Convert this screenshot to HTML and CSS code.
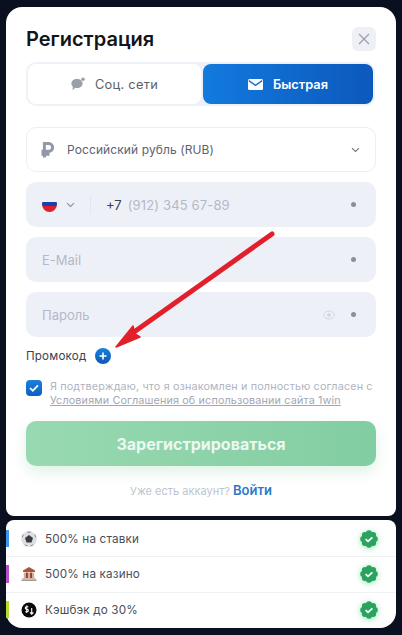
FILE: index.html
```html
<!DOCTYPE html>
<html lang="ru">
<head>
  <meta charset="UTF-8" />
  <meta name="viewport" content="width=device-width, initial-scale=1.0"/>
  <title>Регистрация</title>
  <link rel="stylesheet" href="styles.css">
</head>
<body>

  <section class="card">
    <div class="head">
      <h1>Регистрация</h1>
      <button class="close" type="button" aria-label="Закрыть">
        <svg width="12" height="12" viewBox="0 0 12 12"><path d="M1 1l10 10M11 1L1 11" stroke="#9aa3b5" stroke-width="1.4" fill="none"/></svg>
      </button>
    </div>

    <div class="tabs">
      <div class="tab">
        <svg width="14" height="14" viewBox="0 0 14 14"><path d="M6 2c3.200 0 5.600 1.900 5.600 4.500S9.200 11 6 11c-.6 0-1.200-.1-1.700-.2L1.500 13.200l.4-3.500C.9 8.900.4 7.800.4 6.500.4 3.900 2.800 2 6 2z" fill="#9a9fa8"/><circle cx="12" cy="2.200" r="1.800" fill="#9a9fa8"/></svg>
        <span>Соц. сети</span>
      </div>
      <div class="tab tab-active">
        <svg width="15" height="11" viewBox="0 0 15 11"><rect width="15" height="11" rx="1.500" fill="#fff"/><path d="M.8 1.600l6.700 4.800 6.700-4.800" stroke="#1472d0" stroke-width="1.300" fill="none"/></svg>
        <span>Быстрая</span>
      </div>
    </div>

    <div class="select">
      <svg class="rub" width="13" height="16" viewBox="0 0 13 16"><path d="M3.400 15.500V1.600h4.400a3.800 3.800 0 0 1 0 7.600H.5M.5 12.300h8" stroke="#9298a8" stroke-width="3" fill="none"/></svg>
      <span class="select-text">Российский рубль (RUB)</span>
      <svg class="chev" width="9" height="6" viewBox="0 0 9 6"><path d="M1 1.200l3.500 3.200L8 1.200" stroke="#6d7482" stroke-width="1.100" fill="none"/></svg>
    </div>

    <div class="field">
      <span class="flag"></span>
      <svg class="chev" width="9" height="6" viewBox="0 0 9 6"><path d="M1 1.200l3.500 3.200L8 1.200" stroke="#8a90a0" stroke-width="1.100" fill="none"/></svg>
      <span class="sep"></span>
      <span class="code">+7</span>
      <span class="ph phone">(912) 345 67-89</span>
      <span class="dot"></span>
    </div>
    <div class="field">
      <span class="ph">E-Mail</span>
      <span class="dot"></span>
    </div>
    <div class="field">
      <span class="ph">Пароль</span>
      <svg class="eye" width="12" height="10" viewBox="0 0 12 10"><ellipse cx="6" cy="5" rx="5.300" ry="4" stroke="#d3d8e3" fill="none"/><circle cx="6" cy="5" r="2" fill="#d3d8e3"/></svg>
      <span class="dot"></span>
    </div>

    <div class="promo">
      <span>Промокод</span>
      <span class="plus">
        <svg width="8" height="8" viewBox="0 0 8 8"><path d="M4 .5v7M.5 4h7" stroke="#fff" stroke-width="1.600"/></svg>
      </span>
    </div>

    <div class="agree">
      <span class="check">
        <svg width="10" height="8" viewBox="0 0 10 8"><path d="M1 4l2.800 2.700L9 1.300" stroke="#fff" stroke-width="1.700" fill="none"/></svg>
      </span>
      <p>Я подтверждаю, что я ознакомлен и полностью согласен с <a href="#">Условиями Соглашения об использовании сайта 1win</a></p>
    </div>

    <button class="submit" type="button">Зарегистрироваться</button>

    <p class="login">Уже есть аккаунт? <a href="#">Войти</a></p>
  </section>

  <section class="bonus">
    <svg class="defs" width="0" height="0">
      <symbol id="badge" viewBox="0 0 18 18">
        <g fill="#2aa35f">
          <circle cx="9" cy="9" r="6.500"/>
          <circle cx="9" cy="3.200" r="3"/>
          <circle cx="13.100" cy="4.900" r="3"/>
          <circle cx="14.800" cy="9" r="3"/>
          <circle cx="13.100" cy="13.100" r="3"/>
          <circle cx="9" cy="14.800" r="3"/>
          <circle cx="4.900" cy="13.100" r="3"/>
          <circle cx="3.200" cy="9" r="3"/>
          <circle cx="4.900" cy="4.900" r="3"/>
        </g>
        <path d="M5.600 9.100l2.400 2.200 4.400-4" stroke="#fff" stroke-width="1.800" fill="none"/>
      </symbol>
    </svg>
    <div class="row">
      <span class="bar bar-blue"></span>
      <svg class="ico" width="16" height="16" viewBox="0 0 16 16"><circle cx="8" cy="8" r="7.800" fill="#dfdfe1"/><path d="M8 4l4 2.900-1.500 4.600h-5L4 6.900z" fill="#3a3c41"/><path d="M5.500.9L8 1.800 10.500.9 8 .4zM.7 7l1.500-2 .2-2.300A7.500 7.500 0 0 0 .7 7zM15.300 7l-1.500-2-.2-2.300A7.500 7.500 0 0 1 15.300 7zM3 13.600l2.600.3 1.200 1.600A7.500 7.500 0 0 1 3 13.600zM13 13.600l-2.600.3-1.200 1.600A7.500 7.500 0 0 0 13 13.600z" fill="#77797e"/></svg>
      <span class="row-text">500% на ставки</span>
      <svg class="badge" width="18" height="18"><use href="#badge"/></svg>
    </div>
    <div class="row">
      <span class="bar bar-purple"></span>
      <svg class="ico" width="16" height="16" viewBox="0 0 16 16"><path d="M8 1l6 3.400V6H2V4.400z" fill="#a4563f"/><path d="M2.800 6.500h2.200V12H2.800zM6.900 6.500h2.200V12H6.900zM11 6.500h2.200V12H11z" fill="#e0a98f"/><path d="M5 6.500h1.900V12H5zM9.100 6.500H11V12H9.100z" fill="#8f3f2f"/><path d="M1.500 12h13v1.500h-13z" fill="#c9b8ae"/><path d="M.5 13.500h15V15H.5z" fill="#a39a96"/></svg>
      <span class="row-text">500% на казино</span>
      <svg class="badge" width="18" height="18"><use href="#badge"/></svg>
    </div>
    <div class="row">
      <span class="bar bar-lime"></span>
      <svg class="ico" width="16" height="16" viewBox="0 0 16 16"><circle cx="8" cy="8" r="7.500" fill="#0b0b0d"/><path d="M7.300 4.700H5.500a1.200 1.200 0 0 0 0 2.500h.6a1.200 1.200 0 0 1 0 2.500H4.300M5.800 3.500v7.500M10.700 6v6M9 10.300l1.700 1.800 1.700-1.800" stroke="#fff" stroke-width="1.100" fill="none"/></svg>
      <span class="row-text">Кэшбэк до 30%</span>
      <svg class="badge" width="18" height="18"><use href="#badge"/></svg>
    </div>
  </section>

  <!-- red arrow drawn over the form -->
  <svg class="arrow" width="402" height="635" viewBox="0 0 402 635">
    <path d="M272 234L127 337" stroke="#e2202c" stroke-width="5" stroke-linecap="round" fill="none"/>
    <path d="M116 347l17-21 2 8 5 3z" fill="#e2202c" stroke="#e2202c" stroke-width="1.500" stroke-linejoin="round"/>
  </svg>

</body>
</html>
```

FILE: styles.css
```css
* {
  box-sizing: border-box;
}

body {
  margin: 0;
  width: 402px;
  height: 635px;
  overflow: hidden;
  padding: 7px 6px 0;
  background: #0a1020;
  font-family: Inter, 'Noto Sans', sans-serif;
  display: flex;
  flex-direction: column;
  gap: 4px;
  position: relative;
}

.card {
  height: 509px;
  background: #fff;
  border-radius: 16px 16px 8px 8px;
  padding: 20px 20px 0;
}

.head {
  display: flex;
  justify-content: space-between;
  align-items: center;
  height: 24px;
}

h1 {
  margin: 0;
  font-size: 20px;
  font-weight: 600;
  color: #12151c;
}

.close {
  width: 24px;
  height: 24px;
  border: none;
  border-radius: 6px;
  background: #eef0f6;
  display: flex;
  align-items: center;
  justify-content: center;
  padding: 0;
}

.tabs {
  width: 349px;
  height: 44px;
  margin-top: 11px;
  padding: 2px;
  display: flex;
  gap: 2px;
  background: #eef1f7;
  border-radius: 10px;
}

.tab {
  width: 173px;
  flex: none;
  display: flex;
  align-items: center;
  justify-content: center;
  gap: 10px;
  background: #fff;
  border-radius: 8px;
  font-size: 12.8px;
  color: #5c606a;
  letter-spacing: 0.3px;
}

.tab-active {
  width: 170px;
  background: linear-gradient(90deg, #127ade, #0d58bc);
  color: #fff;
  font-weight: 600;
  letter-spacing: 0;
}

.select {
  height: 45px;
  margin-top: 21px;
  padding: 0 15px 0 14px;
  display: flex;
  align-items: center;
  border: 1px solid #eceef4;
  border-radius: 10px;
  font-size: 12px;
  color: #5c6270;
}

.select-text {
  margin-left: 13px;
  letter-spacing: 0.1px;
}

.select .chev {
  margin-left: auto;
}

.field {
  height: 45px;
  margin-top: 10px;
  padding: 0 20px 0 16px;
  display: flex;
  align-items: center;
  background: #eef0f7;
  border-radius: 10px;
  font-size: 13px;
}

.flag {
  width: 15px;
  height: 15px;
  border-radius: 50%;
  background: linear-gradient(#eef0f7 33%, #1c3fa8 33%, #1c3fa8 62%, #d8202f 62%);
}

.field .chev {
  margin-left: 9px;
}

.sep {
  width: 1px;
  height: 18px;
  margin: 0 15px 0 15px;
  background: #e2e5ee;
}

.code {
  color: #3d414b;
}

.ph {
  color: #b4b9c7;
}

.phone {
  margin-left: 6px;
  letter-spacing: 0.15px;
}

.dot {
  width: 5px;
  height: 5px;
  margin-left: auto;
  border-radius: 50%;
  background: #8b8f99;
}

.eye {
  margin-left: auto;
  margin-right: 16px;
}

.eye + .dot {
  margin-left: 0;
}

.promo {
  display: flex;
  align-items: center;
  gap: 9px;
  margin-top: 10px;
  height: 18px;
  font-size: 11.6px;
  color: #3d414b;
  letter-spacing: 0.2px;
}

.plus {
  width: 16px;
  height: 16px;
  border-radius: 50%;
  background: linear-gradient(#1a80dc, #0d58b8);
  display: flex;
  align-items: center;
  justify-content: center;
}

.agree {
  display: flex;
  gap: 8px;
  margin-top: 15px;
}

.check {
  flex: none;
  width: 16px;
  height: 16px;
  border-radius: 4px;
  background: linear-gradient(#1a80dc, #0d5fc4);
  display: flex;
  align-items: center;
  justify-content: center;
}

.agree p {
  margin: 0;
  font-size: 10.8px;
  line-height: 14px;
  color: #b0b4c0;
  letter-spacing: 0.14px;
}

.agree a {
  color: #a3a7b3;
  text-decoration: underline;
}

.submit {
  display: block;
  width: 100%;
  height: 45px;
  margin-top: 13px;
  border: none;
  border-radius: 10px;
  background: linear-gradient(90deg, #98d9b1, #83cda3);
  box-shadow: 0 6px 14px rgba(130, 205, 163, 0.25);
  color: #ecf8f1;
  font-family: inherit;
  font-size: 16px;
  font-weight: 700;
}

.login {
  margin: 16px 0 0;
  text-align: center;
  font-size: 11px;
  color: #c0c4cf;
}

.login a {
  color: #2a78c8;
  font-size: 13px;
  font-weight: 600;
  text-decoration: none;
}

.bonus {
  height: 108px;
  padding: 2px 0 1px;
  background: #fff;
  border-radius: 8px 8px 16px 16px;
  display: flex;
  flex-direction: column;
}

.defs {
  position: absolute;
}

.row {
  flex: 1;
  display: flex;
  align-items: center;
  padding: 0 18px 0 15px;
  border-bottom: 1px solid #eff1f5;
  position: relative;
}

.row:last-of-type {
  border-bottom: none;
}

.bar {
  position: absolute;
  left: 0;
  top: 8px;
  bottom: 9px;
  width: 3px;
}

.bar-blue {
  background: #3d96e8;
}

.bar-purple {
  background: #b44fc9;
}

.bar-lime {
  background: #b4dc2c;
}

.row-text {
  margin-left: 8px;
  font-size: 11.7px;
  color: #4a4e58;
  letter-spacing: 0.15px;
}

.badge {
  margin-left: auto;
  filter: drop-shadow(0 1px 3px rgba(50, 200, 110, 0.5));
}

.arrow {
  position: absolute;
  left: 0;
  top: 0;
  pointer-events: none;
}
```
